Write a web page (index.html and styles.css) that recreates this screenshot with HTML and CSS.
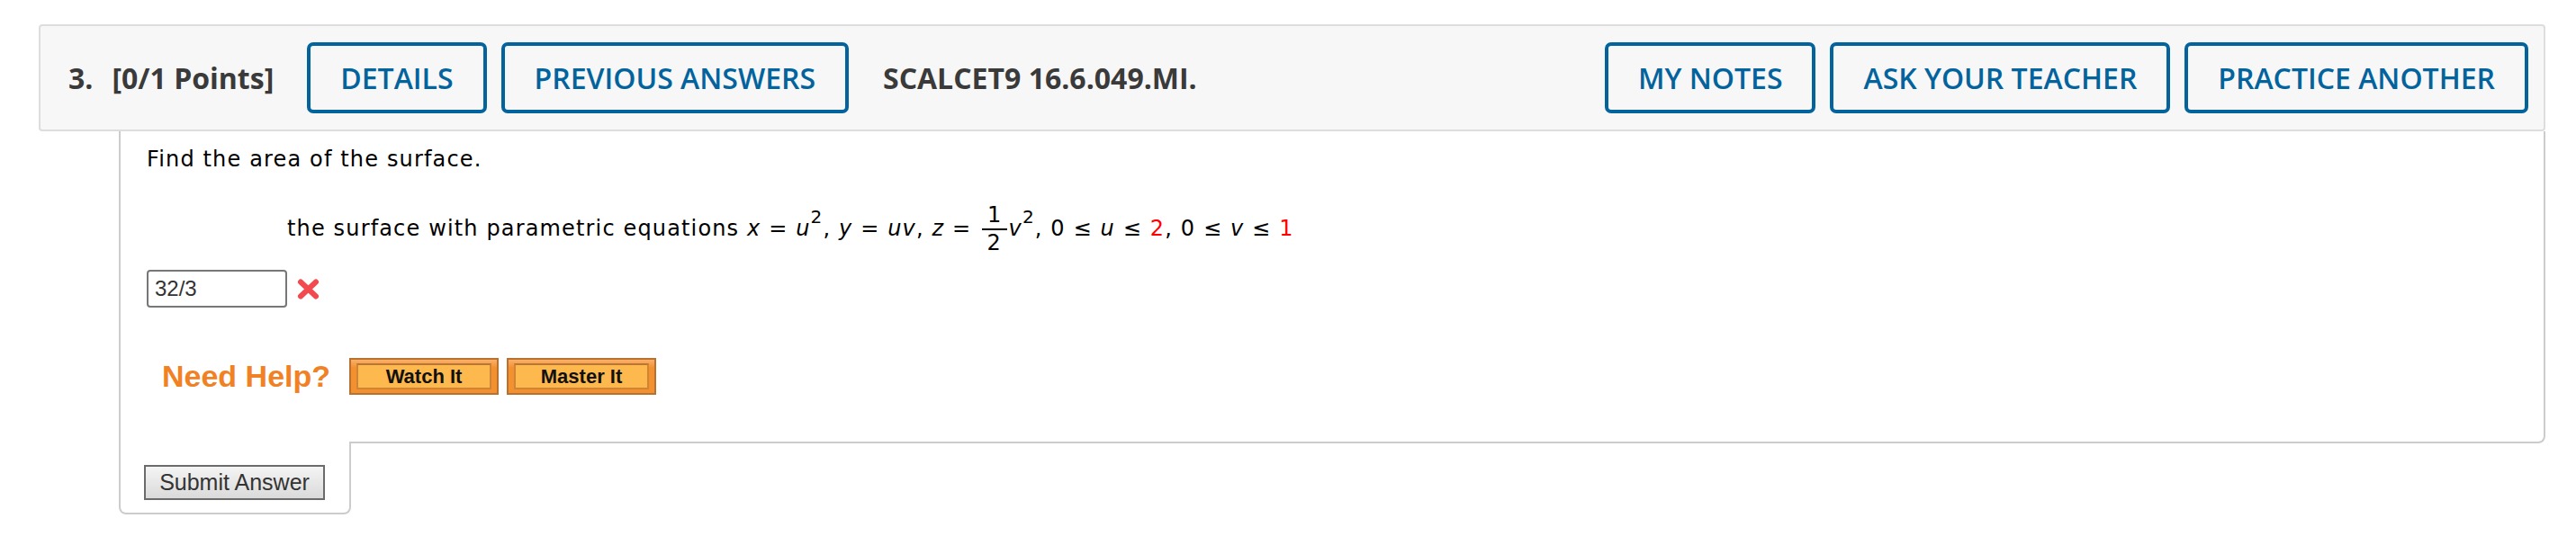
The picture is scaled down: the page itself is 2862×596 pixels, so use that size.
FILE: index.html
```html
<!DOCTYPE html>
<html>
<head>
<meta charset="utf-8">
<link rel="stylesheet" href="styles.css">
</head>
<body>
<div class="page">
  <div class="qhead">
    <span class="qnum">3.</span>
    <span class="qpts">[0/1 Points]</span>
    <a class="hbtn first">DETAILS</a>
    <a class="hbtn">PREVIOUS ANSWERS</a>
    <span class="qcode">SCALCET9 16.6.049.MI.</span>
    <span class="spacer"></span>
    <a class="hbtn">MY NOTES</a>
    <a class="hbtn">ASK YOUR TEACHER</a>
    <a class="hbtn">PRACTICE ANOTHER</a>
  </div>
  <div class="qbody">
    <p class="find">Find the area of the surface.</p>
    <div class="eq">the surface with parametric equations <i>x</i> = <i>u</i><sup>2</sup>, <i>y</i> = <i>uv</i>, <i>z</i> = <span class="frac"><span class="num">1</span><span class="den">2</span></span><i>v</i><sup>2</sup>, 0 ≤ <i>u</i> ≤ <span class="red">2</span>, 0 ≤ <i>v</i> ≤ <span class="red">1</span></div>
    <div class="answer">
      <div class="inp">32/3</div>
      <svg class="wrong" width="27" height="25" viewBox="0 0 27 25"><path d="M5 4.5 L22 20.5 M22 4.5 L5 20.5" stroke="#f24a4e" stroke-width="6" stroke-linecap="round"/></svg>
    </div>
    <div class="help">
      <span class="needhelp">Need Help?</span>
      <span class="obtn"><span class="obtn-in">Watch It</span></span>
      <span class="obtn"><span class="obtn-in">Master It</span></span>
    </div>
  </div>
  <div class="submitbox">
    <div class="submit">Submit Answer</div>
  </div>
</div>
</body>
</html>
```

FILE: styles.css
```css
html, body {
  margin: 0;
  padding: 0;
  background: #fff;
}
.page {
  padding: 27px 34px 0 43px;
}
.qhead {
  display: flex;
  align-items: center;
  background: #f7f7f7;
  border: 2px solid #dddddd;
  border-radius: 4px;
  padding: 18px 17px 18px 31px;
  font-family: "Open Sans", sans-serif;
  color: #3a3a3a;
}
.qnum {
  font-weight: 700;
  font-size: 32px;
  margin-right: 21px;
}
.qpts {
  font-weight: 700;
  font-size: 32px;
  margin-right: 37px;
}
.qcode {
  font-weight: 700;
  font-size: 32px;
  margin-left: 38px;
}
.spacer {
  flex: 1;
}
.hbtn {
  box-sizing: border-box;
  height: 79px;
  display: flex;
  align-items: center;
  padding: 0 33px;
  border: 4px solid #03639d;
  border-radius: 7px;
  color: #03639d;
  font-size: 32px;
  font-weight: 600;
  margin-left: 16px;
  white-space: nowrap;
}
.hbtn.first {
  margin-left: 0;
}
.qbody {
  margin-left: 89px;
  border: 2px solid #cccccc;
  border-top: none;
  border-bottom-right-radius: 8px;
  padding: 17px 0 52px 29px;
  font-family: "DejaVu Sans", Verdana, sans-serif;
  font-size: 24px;
  letter-spacing: 1.15px;
  color: #000;
}
.find {
  margin: 0;
  line-height: 28px;
}
.eq {
  margin: 34px 0 0 156px;
  line-height: 28px;
  white-space: nowrap;
}
.eq sup {
  font-size: 20px;
  line-height: 0;
  vertical-align: 14px;
}
.frac {
  display: inline-flex;
  flex-direction: column;
  align-items: center;
  vertical-align: middle;
  margin: 0 2px 0 3px;
}
.frac .num {
  line-height: 28px;
  padding: 0 5px 1px 6px;
  border-bottom: 2px solid #000;
}
.frac .den {
  line-height: 28px;
}
.red {
  color: #ff0000;
}
.answer {
  display: flex;
  align-items: center;
  gap: 10px;
  margin-top: 16px;
  letter-spacing: 0;
}
.inp {
  box-sizing: border-box;
  width: 156px;
  height: 42px;
  border: 2px solid #777777;
  border-radius: 4px;
  font-family: "Liberation Sans", Arial, sans-serif;
  font-size: 24px;
  color: #333;
  padding-left: 7px;
  line-height: 38px;
}
.wrong {
  display: block;
}
.help {
  display: flex;
  align-items: center;
  margin-top: 56px;
  padding-left: 17px;
  letter-spacing: 0;
}
.needhelp {
  font-family: "Liberation Sans", Arial, sans-serif;
  font-weight: 700;
  font-size: 34px;
  color: #f08225;
  margin-right: 21px;
}
.obtn {
  box-sizing: border-box;
  width: 166px;
  height: 41px;
  border: 2px solid #b8712f;
  background: linear-gradient(#f9b06a, #f3902f 25%, #f3902f);
  padding: 4px 6px;
  margin-right: 9px;
  display: flex;
}
.obtn-in {
  flex: 1;
  border: 2px solid #cf8535;
  border-top-color: #b97531;
  background: #fdb84e;
  display: flex;
  align-items: center;
  justify-content: center;
  font-family: "Liberation Sans", Arial, sans-serif;
  font-weight: 700;
  font-size: 22px;
  color: #111;
}
.submitbox {
  box-sizing: border-box;
  width: 258px;
  margin-left: 89px;
  margin-top: -2px;
  background: #fff;
  border: 2px solid #cccccc;
  border-top: none;
  border-radius: 0 0 8px 8px;
  padding: 26px 0 14px 26px;
}
.submit {
  box-sizing: border-box;
  width: 201px;
  height: 39px;
  border: 2px solid #6b6b6b;
  background: linear-gradient(#f4f4f4, #dadada);
  font-family: "Liberation Sans", Arial, sans-serif;
  font-size: 25px;
  color: #333;
  display: flex;
  align-items: center;
  justify-content: center;
}
```
